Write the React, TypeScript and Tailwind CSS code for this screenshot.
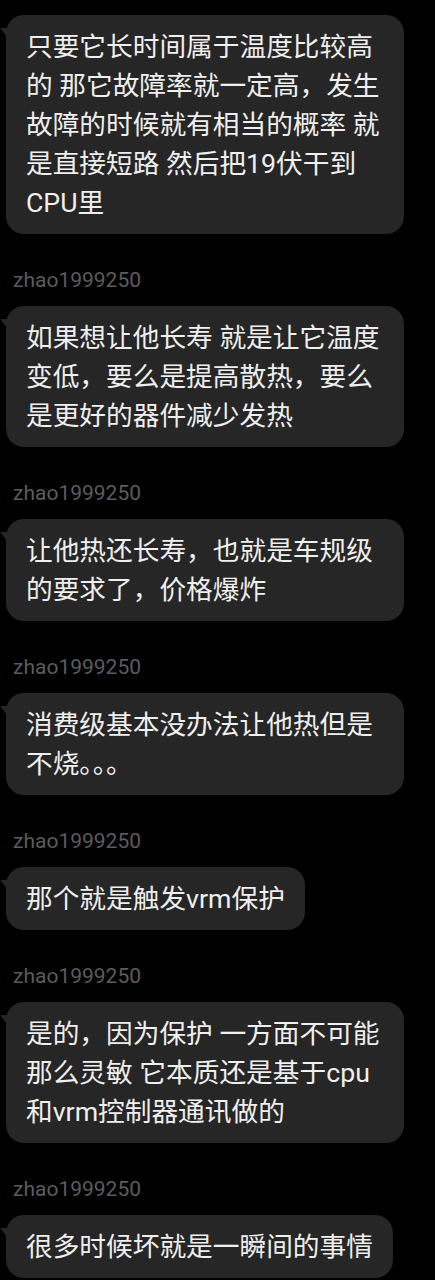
type Message = {
  lines: string[];
  showName: boolean;
};

const messages: Message[] = [
  {
    showName: false,
    lines: [
      "只要它长时间属于温度比较高",
      "的 那它故障率就一定高，发生",
      "故障的时候就有相当的概率 就",
      "是直接短路 然后把19伏干到",
      "CPU里",
    ],
  },
  {
    showName: true,
    lines: [
      "如果想让他长寿 就是让它温度",
      "变低，要么是提高散热，要么",
      "是更好的器件减少发热",
    ],
  },
  {
    showName: true,
    lines: ["让他热还长寿，也就是车规级", "的要求了，价格爆炸"],
  },
  {
    showName: true,
    lines: ["消费级基本没办法让他热但是", "不烧。。。"],
  },
  { showName: true, lines: ["那个就是触发vrm保护"] },
  {
    showName: true,
    lines: [
      "是的，因为保护 一方面不可能",
      "那么灵敏 它本质还是基于cpu",
      "和vrm控制器通讯做的",
    ],
  },
  { showName: true, lines: ["很多时候坏就是一瞬间的事情"] },
];

function Tail() {
  return (
    <svg
      className="absolute -left-[6px] top-[13px]"
      width="8"
      height="11"
      viewBox="0 0 8 11"
    >
      <path d="M8 0 H1.5 Q0 0 1 1.3 Q5 5.5 8 11 Z" fill="#262626" />
    </svg>
  );
}

function Bubble({ lines }: { lines: string[] }) {
  const multi = lines.length > 1;
  return (
    <div
      className={`relative rounded-[18px] bg-[#262626] pl-5 pr-5 pt-[13px] pb-[11px] text-[26.7px] leading-[39px] text-[#efefef] ${
        multi ? "w-[398px]" : "w-fit"
      }`}
    >
      <Tail />
      {lines.map((line, i) => (
        <div key={i} className="whitespace-pre">
          {line}
        </div>
      ))}
    </div>
  );
}

export default function App() {
  return (
    <div
      className="min-h-screen bg-black pl-[6px] pt-[15px] pb-4"
      style={{ fontFamily: 'Roboto, "Noto Sans CJK SC", sans-serif' }}
    >
      {messages.map((m, i) => (
        <div key={i}>
          {m.showName && (
            <div className="mt-[34px] mb-[14px] pl-[7px] text-[21px] leading-[24px] text-[#5c5c5c]">
              zhao1999250
            </div>
          )}
          <Bubble lines={m.lines} />
        </div>
      ))}
    </div>
  );
}
